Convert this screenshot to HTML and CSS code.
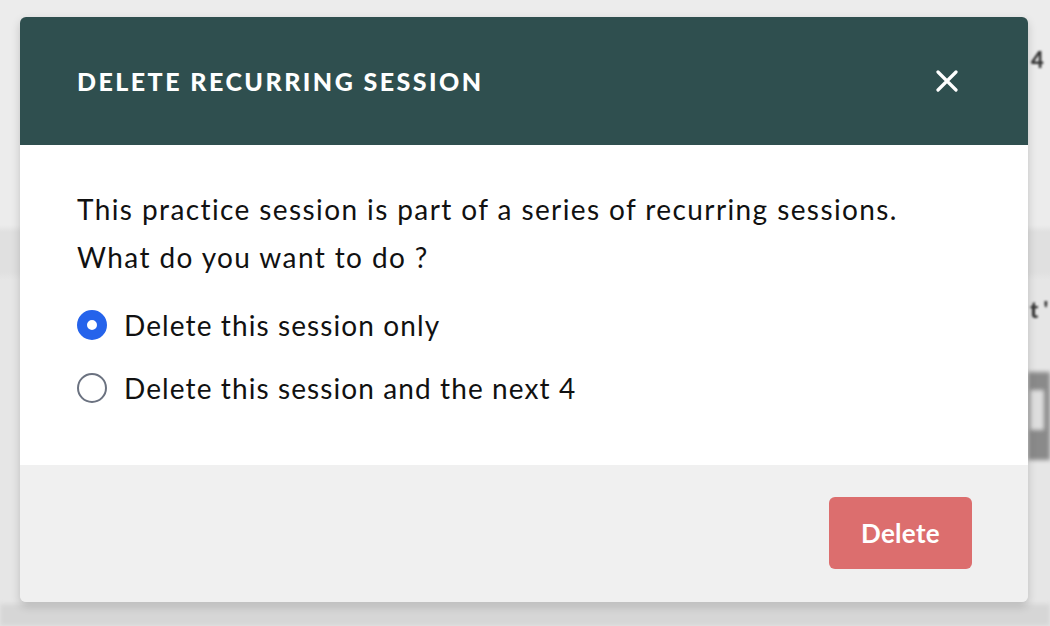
FILE: index.html
```html
<!DOCTYPE html>
<html>
<head>
<meta charset="utf-8">
<link rel="stylesheet" href="styles.css">
</head>
<body>
<div class="backdrop">
  <div class="bg-shape s1"></div>
  <div class="bg-shape s2"></div>
  <div class="bg-shape s3"></div>
  <span class="bg-text t1">4</span>
  <span class="bg-text t2">t '</span>
  <div class="modal">
    <div class="modal-header">
      <h2 class="title">DELETE RECURRING SESSION</h2>
      <button class="close" aria-label="Close">
        <svg width="22" height="22" viewBox="0 0 22 22"><path d="M2 2L20 20M20 2L2 20" stroke="#fff" stroke-width="3.2" stroke-linecap="round"/></svg>
      </button>
    </div>
    <div class="modal-body">
      <p class="message">This practice session is part of a series of recurring sessions.<br>What do you want to do ?</p>
      <label class="option"><span class="radio checked"></span><span>Delete this session only</span></label>
      <label class="option"><span class="radio"></span><span>Delete this session and the next 4</span></label>
    </div>
    <div class="modal-footer">
      <button class="delete-btn">Delete</button>
    </div>
  </div>
</div>
</body>
</html>
```

FILE: styles.css
```css
html, body {
  margin: 0;
  padding: 0;
  width: 1050px;
  height: 626px;
  overflow: hidden;
}
body {
  background: #e4e4e4;
  font-family: "Lato", "Open Sans", sans-serif;
}
.backdrop {
  position: relative;
  width: 1050px;
  height: 626px;
  padding: 17px 0 0 20px;
  box-sizing: border-box;
  background: linear-gradient(#ececec 0, #ececec 225px, #e0e0e0 232px, #e0e0e0 272px, #e6e6e6 280px);
}
.bg-shape {
  position: absolute;
  filter: blur(2px);
}
.bg-text {
  position: absolute;
  filter: blur(0.8px);
  color: #333;
  font-weight: 900;
  font-size: 22px;
}
.t1 { left: 1031px; top: 46px; }
.t2 { left: 1030px; top: 296px; }
.s1 { left: 1028px; top: 372px; width: 22px; height: 88px; background: #8a8a8a; }
.s2 { left: 1030px; top: 390px; width: 14px; height: 40px; background: #dedede; }
.s3 { left: 0; top: 604px; width: 1050px; height: 22px; background: #d6d6d6; }
.modal {
  position: relative;
  width: 1008px;
  border-radius: 6px;
  overflow: hidden;
  box-shadow: 0 4px 10px rgba(0,0,0,0.18);
}
.modal-header {
  height: 128px;
  background: #2f4f4f;
  display: flex;
  align-items: center;
  justify-content: space-between;
  padding: 0 70px 0 57px;
  box-sizing: border-box;
}
.title {
  margin: 0;
  color: #fff;
  font-weight: 900;
  font-size: 25px;
  letter-spacing: 2.45px;
}
.close {
  background: none;
  border: 0;
  padding: 0;
  width: 22px;
  height: 22px;
  display: flex;
  cursor: pointer;
}
.modal-body {
  background: #fff;
  height: 320px;
  box-sizing: border-box;
  padding: 40px 57px 0 57px;
  color: #111;
}
.message {
  margin: 0 0 12px 0;
  font-size: 28px;
  line-height: 48px;
  letter-spacing: 1.4px;
}
.option {
  display: flex;
  align-items: center;
  gap: 17px;
  height: 63px;
  font-size: 28px;
  letter-spacing: 1.1px;
}
.radio {
  width: 30px;
  height: 30px;
  border-radius: 50%;
  box-sizing: border-box;
  border: 2px solid #6b7280;
  flex: none;
}
.radio.checked {
  border: 10px solid #2563eb;
  background: #fff;
}
.modal-footer {
  background: #f0f0f0;
  height: 137px;
  display: flex;
  justify-content: flex-end;
  align-items: flex-start;
  padding: 32px 56px 0 0;
  box-sizing: border-box;
}
.delete-btn {
  width: 143px;
  height: 72px;
  border: 0;
  border-radius: 6px;
  background: #dc6e6e;
  color: #fff;
  font-family: inherit;
  font-weight: 700;
  font-size: 26px;
  letter-spacing: 0.3px;
}
```
